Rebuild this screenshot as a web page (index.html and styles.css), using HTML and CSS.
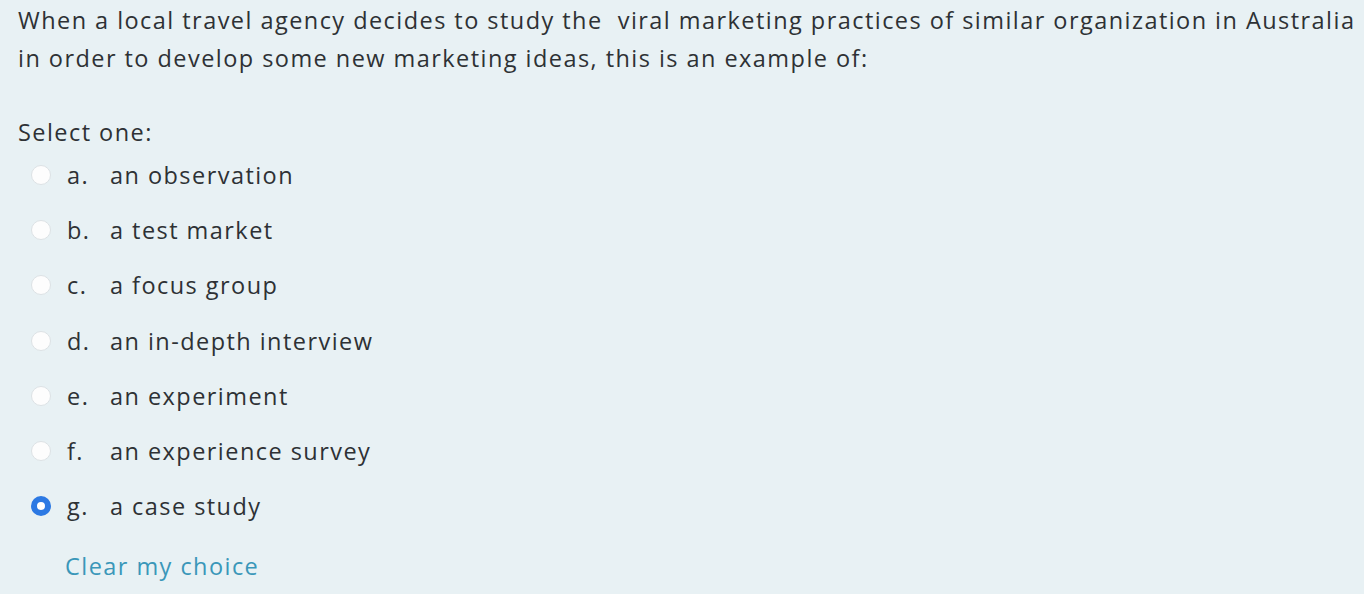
FILE: index.html
```html
<!DOCTYPE html>
<html>
<head>
<meta charset="utf-8">
<link rel="stylesheet" href="styles.css">
</head>
<body>
<div class="question">
  <div class="qtext">When a local travel agency decides to study the&nbsp; viral marketing practices of similar organization in Australia<br>in order to develop some new marketing ideas, this is an example of:</div>
  <div class="prompt">Select one:</div>
  <div class="answers">
    <label class="opt"><span class="radio"></span><span class="letter">a.</span><span class="text">an observation</span></label>
    <label class="opt"><span class="radio"></span><span class="letter">b.</span><span class="text">a test market</span></label>
    <label class="opt"><span class="radio"></span><span class="letter">c.</span><span class="text">a focus group</span></label>
    <label class="opt"><span class="radio"></span><span class="letter">d.</span><span class="text">an in-depth interview</span></label>
    <label class="opt"><span class="radio"></span><span class="letter">e.</span><span class="text">an experiment</span></label>
    <label class="opt"><span class="radio"></span><span class="letter">f.</span><span class="text">an experience survey</span></label>
    <label class="opt"><span class="radio checked"></span><span class="letter">g.</span><span class="text">a case study</span></label>
  </div>
  <a class="clear" href="#">Clear my choice</a>
</div>
</body>
</html>
```
FILE: styles.css
```css
html, body {
  margin: 0;
  padding: 0;
  background: #e8f1f4;
}
body {
  font-family: "Open Sans", "DejaVu Sans", sans-serif;
  color: #2e3135;
  font-size: 23.5px;
  letter-spacing: 1.45px;
}
.question {
  padding: 1px 0 0 18px;
}
.qtext {
  line-height: 38px;
  white-space: nowrap;
}
.prompt {
  margin-top: 40px;
  line-height: 30px;
}
.answers {
  display: flex;
  flex-direction: column;
  padding-left: 13px;
}
.opt {
  display: flex;
  align-items: center;
  height: 55.3px;
}
.radio {
  width: 20px;
  height: 20px;
  border-radius: 50%;
  background: #fdfdfd;
  border: 1px solid #dde2e5;
  margin-right: 16px;
  box-sizing: border-box;
}
.radio.checked {
  background: #fff;
  border: 6.5px solid #2c79e3;
}
.letter {
  width: 43px;
}
.clear {
  display: block;
  width: fit-content;
  line-height: 30px;
  margin: 17px 0 0 47px;
  color: #3a97b9;
  text-decoration: none;
}
```
